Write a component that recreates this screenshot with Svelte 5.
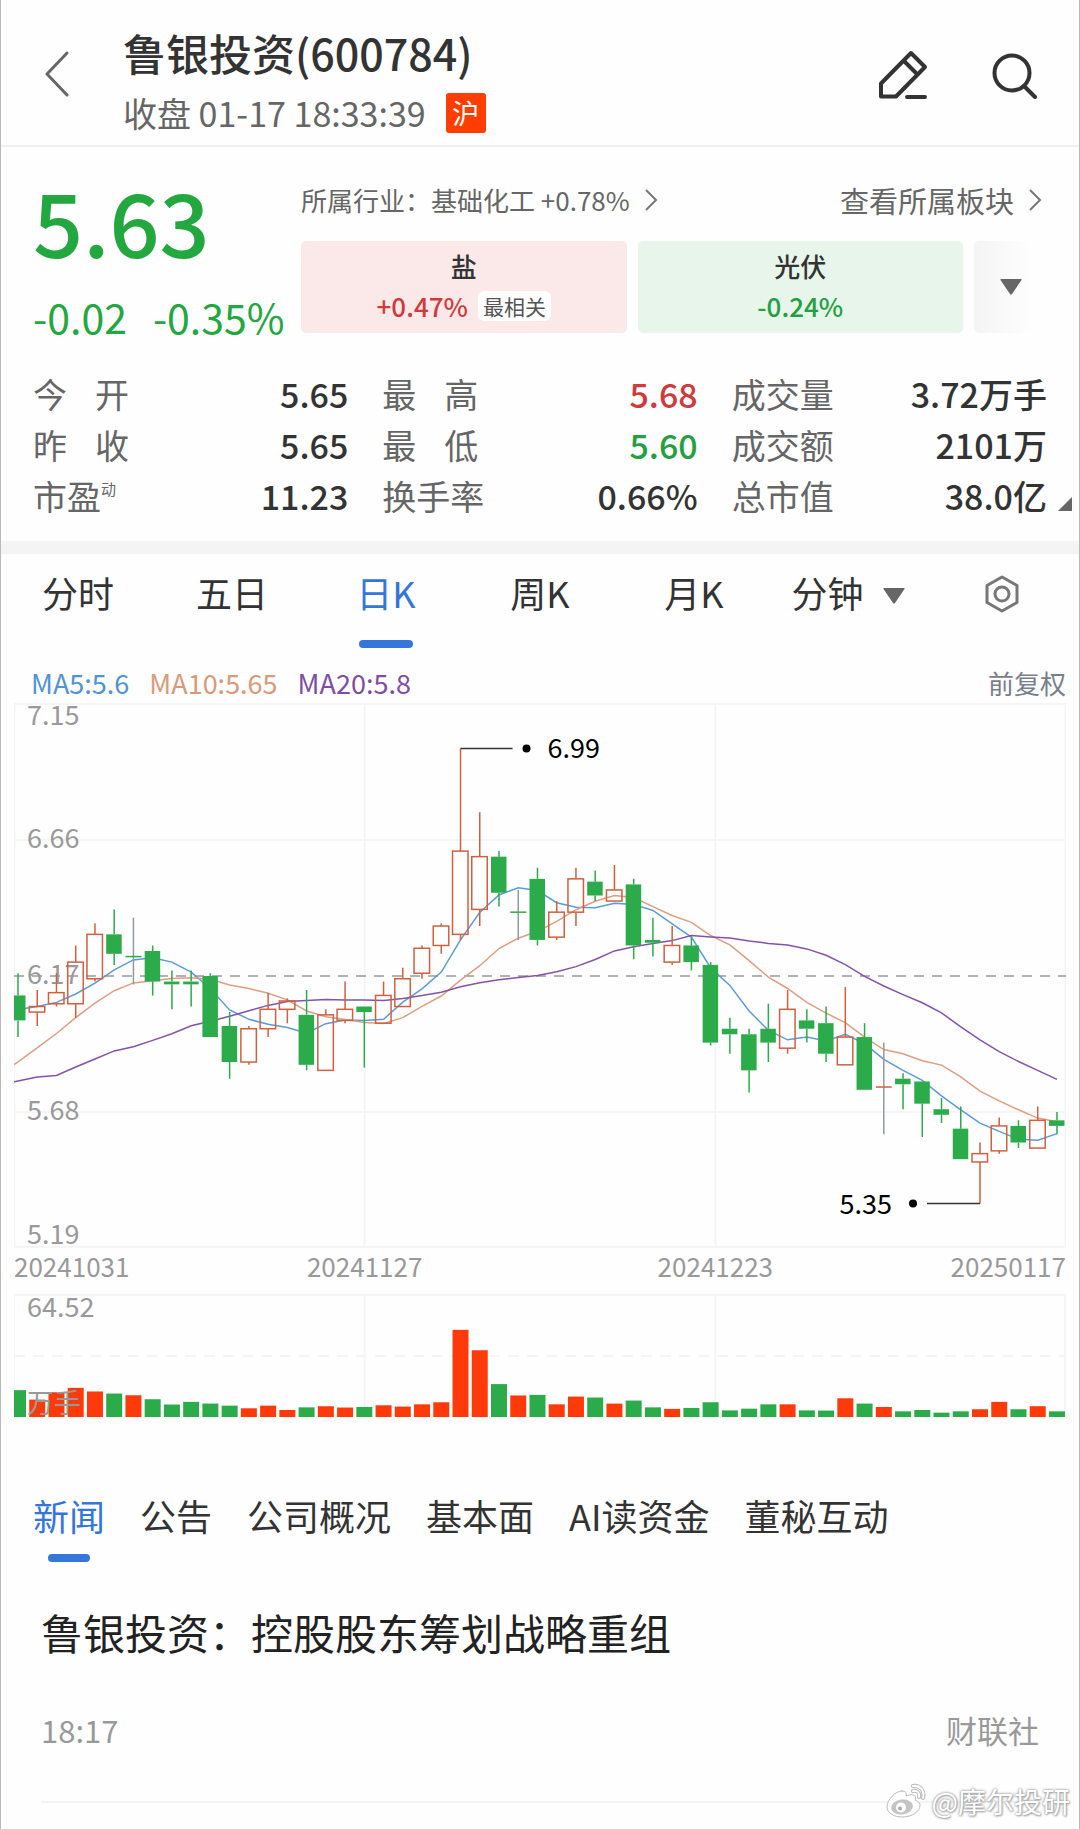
<script lang="ts">
  interface Candle {
    open: number;
    close: number;
    high: number;
    low: number;
    vol: number;
  }

  const periods = ['分时', '五日', '日K', '周K', '月K'];
  const sections = ['新闻', '公告', '公司概况', '基本面', 'AI读资金', '董秘互动'];

  let activePeriod = $state('日K');
  let activeSection = $state('新闻');

  const stats = [
    { label: '今 开', value: '5.65' },
    { label: '最 高', value: '5.68', tone: 'up' },
    { label: '成交量', value: '3.72万手' },
    { label: '昨 收', value: '5.65' },
    { label: '最 低', value: '5.60', tone: 'down' },
    { label: '成交额', value: '2101万' },
    { label: '市盈', sup: '动', value: '11.23' },
    { label: '换手率', value: '0.66%' },
    { label: '总市值', value: '38.0亿' }
  ];

  // open, close, high, low, volume
  const rows = [
    [6.10, 6.01, 6.18, 5.95, 14.2], [6.04, 6.06, 6.12, 5.99, 9.2], [6.07, 6.11, 6.18, 6.06, 13.1],
    [6.07, 6.22, 6.28, 6.02, 15.4], [6.16, 6.32, 6.36, 6.15, 13.5], [6.32, 6.25, 6.41, 6.21, 12.4],
    [6.24, 6.24, 6.38, 6.14, 11.5], [6.26, 6.15, 6.28, 6.10, 9.4], [6.15, 6.14, 6.19, 6.05, 6.6],
    [6.15, 6.14, 6.19, 6.06, 8.0], [6.17, 5.95, 6.18, 5.95, 7.1], [5.99, 5.86, 6.04, 5.80, 6.0],
    [5.86, 5.98, 5.99, 5.85, 4.6], [5.98, 6.05, 6.11, 5.95, 6.0], [6.05, 6.08, 6.09, 6.00, 3.7],
    [6.03, 5.85, 6.12, 5.83, 5.1], [5.83, 6.03, 6.05, 5.83, 5.7], [6.01, 6.05, 6.15, 6.00, 5.0],
    [6.06, 6.04, 6.06, 5.84, 5.3], [6.00, 6.10, 6.15, 6.00, 6.2], [6.06, 6.16, 6.20, 6.06, 5.5],
    [6.18, 6.27, 6.28, 6.16, 6.7], [6.28, 6.35, 6.36, 6.25, 7.8], [6.32, 6.62, 6.99, 6.30, 46.1],
    [6.41, 6.60, 6.76, 6.35, 35.3], [6.60, 6.47, 6.62, 6.42, 17.4], [6.40, 6.40, 6.48, 6.30, 11.4],
    [6.52, 6.30, 6.56, 6.28, 11.7], [6.31, 6.40, 6.44, 6.30, 6.7], [6.40, 6.52, 6.56, 6.35, 10.8],
    [6.51, 6.46, 6.55, 6.44, 10.3], [6.44, 6.48, 6.57, 6.44, 7.1], [6.50, 6.28, 6.52, 6.23, 8.7],
    [6.30, 6.29, 6.38, 6.24, 5.1], [6.22, 6.28, 6.35, 6.21, 4.3], [6.28, 6.22, 6.31, 6.19, 4.8],
    [6.21, 5.93, 6.22, 5.92, 7.8], [5.98, 5.96, 6.02, 5.89, 3.5], [5.96, 5.83, 5.98, 5.75, 4.4],
    [5.98, 5.93, 6.07, 5.86, 6.7], [5.91, 6.05, 6.12, 5.89, 6.7], [6.01, 5.98, 6.05, 5.93, 3.5],
    [6.00, 5.89, 6.06, 5.86, 3.4], [5.85, 5.95, 6.13, 5.85, 9.9], [5.95, 5.76, 6.00, 5.76, 7.1],
    [5.77, 5.77, 5.93, 5.60, 5.3], [5.80, 5.78, 5.82, 5.69, 3.0], [5.79, 5.71, 5.79, 5.59, 3.7],
    [5.69, 5.67, 5.73, 5.64, 2.3], [5.62, 5.51, 5.70, 5.51, 3.0], [5.50, 5.53, 5.57, 5.35, 4.1],
    [5.54, 5.63, 5.66, 5.53, 8.0], [5.63, 5.57, 5.65, 5.55, 4.1], [5.55, 5.65, 5.70, 5.55, 5.7],
    [5.65, 5.63, 5.68, 5.60, 3.0]
  ];
  const candles: Candle[] = rows.map(([open, close, high, low, vol]) => ({ open, close, high, low, vol }));

  // averages for the days whose window starts before the first candle
  const lead5 = [6.049, 6.06, 6.075, 6.105];
  const lead10 = [5.861, 5.911, 5.963, 6.02, 6.072, 6.117, 6.145, 6.153, 6.161];
  const lead20 = [
    5.792, 5.806, 5.812, 5.842, 5.871, 5.9, 5.915, 5.938, 5.962, 5.991,
    6.007, 6.025, 6.045, 6.064, 6.078, 6.082, 6.085, 6.084, 6.083
  ];

  const W = 1052;
  const PRICE_H = 544;
  const VOL_H = 122;
  const MAX = 7.15;
  const MIN = 5.19;
  const MAX_VOL = 64.52;
  const STEP = 19.24;

  const x = (i: number) => 4 + i * STEP;
  const y = (p: number) => 1 + ((MAX - p) / (MAX - MIN)) * PRICE_H;
  const volH = (v: number) => (v / MAX_VOL) * VOL_H;

  function average(n: number, lead: number[]) {
    const values = candles.map((_, i) => {
      if (i < lead.length) return lead[i];
      const part = candles.slice(i - n + 1, i + 1);
      return part.reduce((sum, c) => sum + c.close, 0) / n;
    });
    const first = values[0] - (values[1] - values[0]) * (4 / STEP);
    return [`0,${y(first).toFixed(1)}`, ...values.map((v, i) => `${x(i).toFixed(1)},${y(v).toFixed(1)}`)].join(' ');
  }

  const ma5 = average(5, lead5);
  const ma10 = average(10, lead10);
  const ma20 = average(20, lead20);

  const hiIndex = candles.findIndex((c) => c.high === 6.99);
  const loIndex = candles.findIndex((c) => c.low === 5.35);

  // a flat day is compared with the close before it
  function rises(i: number) {
    const c = candles[i];
    if (c.close !== c.open) return c.close > c.open;
    return i > 0 && c.close >= candles[i - 1].close;
  }
</script>

<div class="page">
  <header>
    <button type="button" class="back" aria-label="返回">
      <svg width="26" height="48" viewBox="0 0 26 48">
        <path d="M23 4 3 25l20 21" fill="none" stroke="#666" stroke-width="3" stroke-linecap="round" stroke-linejoin="round" />
      </svg>
    </button>
    <div class="heading">
      <h1>鲁银投资(600784)</h1>
      <p>收盘 01-17 18:33:39 <span class="market">沪</span></p>
    </div>
    <button type="button" class="tool" aria-label="编辑">
      <svg width="52" height="52" viewBox="0 0 52 52" fill="none" stroke="#333" stroke-width="4" stroke-linecap="round" stroke-linejoin="round">
        <path d="M35 6 49 20 20 49.500H5V36.500Z" />
        <path d="M29 15 40 26M31 50H49" />
      </svg>
    </button>
    <button type="button" class="tool" aria-label="搜索">
      <svg width="52" height="52" viewBox="0 0 52 52" fill="none" stroke="#333" stroke-width="4" stroke-linecap="round">
        <circle cx="24" cy="26" r="17.500" />
        <path d="M36 39 47 50" />
      </svg>
    </button>
  </header>

  <section class="quote">
    <div class="summary">
      <div class="price">
        <strong>5.63</strong>
        <div class="change"><span>-0.02</span><span>-0.35%</span></div>
      </div>
      <div class="boards">
        <div class="links">
          <a href="#industry">
            所属行业：基础化工 +0.78%
            <svg width="14" height="24" viewBox="0 0 14 24"><path d="M2 2 12 12 2 22" /></svg>
          </a>
          <a href="#boards" class="all">
            查看所属板块
            <svg width="14" height="24" viewBox="0 0 14 24"><path d="M2 2 12 12 2 22" /></svg>
          </a>
        </div>
        <div class="cards">
          <button type="button" class="card red">
            <span class="name">盐</span>
            <span class="rate">+0.47% <em>最相关</em></span>
          </button>
          <button type="button" class="card green">
            <span class="name">光伏</span>
            <span class="rate">-0.24%</span>
          </button>
          <button type="button" class="more" aria-label="更多板块">
            <svg width="22" height="16" viewBox="0 0 22 16"><path d="M1 0H21Q22 0 21.500 1L12 15Q11 16 10 15L.5 1Q0 0 1 0Z" fill="#666" /></svg>
          </button>
        </div>
      </div>
    </div>

    <dl class="stats">
      {#each stats as s (s.label)}
        <div class="stat">
          <dt class:spread={s.label.includes(' ')}>{s.label}{#if s.sup}<sup>{s.sup}</sup>{/if}</dt>
          <dd class={s.tone ?? ''}>{s.value}</dd>
        </div>
      {/each}
    </dl>
    <svg class="corner" width="14" height="14" viewBox="0 0 14 14"><path d="M14 0V14H0Z" fill="#666" /></svg>
  </section>

  <nav class="periods">
    {#each periods as p (p)}
      <button type="button" class:active={activePeriod === p} onclick={() => (activePeriod = p)}>{p}</button>
    {/each}
    <button type="button" class="minutes">
      分钟
      <svg width="22" height="16" viewBox="0 0 22 16"><path d="M1 0H21Q22 0 21.500 1L12 15Q11 16 10 15L.5 1Q0 0 1 0Z" fill="#666" /></svg>
    </button>
    <button type="button" class="settings" aria-label="图表设置">
      <svg width="36" height="38" viewBox="0 0 36 38" fill="none" stroke="#777" stroke-width="3" stroke-linejoin="round">
        <path d="M18 2 33 10.500V27.500L18 36 3 27.500V10.500Z" />
        <circle cx="18" cy="19" r="7" />
      </svg>
    </button>
  </nav>

  <section class="chart">
    <div class="legend">
      <span class="c5">MA5:5.6</span>
      <span class="c10">MA10:5.65</span>
      <span class="c20">MA20:5.8</span>
      <span class="adjust">前复权</span>
    </div>

    <svg class="plot" viewBox="0 0 {W} 545" role="img" aria-label="日K线">
      <g class="grid">
        <rect x="0.500" y="1" width={W - 1} height={PRICE_H - 1} />
        <path d="M0 {y(6.66)}H{W}M0 {y(5.68)}H{W}M{W / 3} 1V{PRICE_H}M{(W / 3) * 2} 1V{PRICE_H}" />
      </g>
      <path class="mid" d="M0 {y(6.17)}H{W}" />
      <g class="axis">
        <text x="13" y="22">7.15</text>
        <text x="13" y="145">6.66</text>
        <text x="13" y="281">6.17</text>
        <text x="13" y="417">5.68</text>
        <text x="13" y="541">5.19</text>
      </g>

      <polyline class="ma c5" points={ma5} />
      <polyline class="ma c10" points={ma10} />
      <polyline class="ma c20" points={ma20} />

      {#each candles as c, i}
        {@const top = y(Math.max(c.open, c.close))}
        {@const bottom = y(Math.min(c.open, c.close))}
        <g class={rises(i) ? 'rise' : 'fall'}>
          {#if c.open === c.close}
            <path class="flat" d="M{x(i)} {y(c.high)}V{y(c.low)}" />
            <path d="M{x(i) - 8} {top}h16" />
          {:else}
            <path d="M{x(i)} {y(c.high)}V{top}M{x(i)} {bottom}V{y(c.low)}" />
            <rect x={x(i) - 8} y={top} width="15.500" height={bottom - top} />
          {/if}
        </g>
      {/each}

      <g class="mark">
        <path d="M{x(hiIndex)} {y(6.99)}h52M{x(loIndex)} {y(5.35)}h-53" />
        <circle cx={x(hiIndex) + 66} cy={y(6.99)} r="4" />
        <text x={x(hiIndex) + 87} y={y(6.99) + 10}>6.99</text>
        <circle cx={x(loIndex) - 67} cy={y(5.35)} r="4" />
        <text x={x(loIndex) - 88} y={y(5.35) + 10} text-anchor="end">5.35</text>
      </g>
    </svg>

    <div class="dates">
      <span>20241031</span>
      <span>20241127</span>
      <span>20241223</span>
      <span>20250117</span>
    </div>

    <svg class="plot" viewBox="0 0 {W} 124" role="img" aria-label="成交量">
      <g class="grid">
        <path d="M0 {VOL_H}V1H{W - 1}V{VOL_H}M{W / 3} 1V{VOL_H}M{(W / 3) * 2} 1V{VOL_H}" />
        <path d="M0 62H{W}" stroke-dasharray="11 8" />
      </g>
      {#each candles as c, i}
        <rect class={c.close >= c.open ? 'vol-up' : 'vol-down'} x={x(i) - 8} y={VOL_H + 1 - volH(c.vol)} width="16" height={volH(c.vol)} />
      {/each}
      <g class="axis">
        <text x="13" y="23">64.52</text>
        <text x="13" y="119">万手</text>
      </g>
    </svg>
  </section>

  <nav class="sections">
    {#each sections as s (s)}
      <button type="button" class:active={activeSection === s} onclick={() => (activeSection = s)}>{s}</button>
    {/each}
  </nav>

  <article>
    <h2>鲁银投资：控股股东筹划战略重组</h2>
    <div class="meta"><time>18:17</time><span>财联社</span></div>
  </article>

  <div class="watermark">
    <svg width="40" height="36" viewBox="0 0 40 36" fill="none" stroke-linecap="round">
      <path d="M16 8C9 8 1 17 1 24c0 6 7 10 15 10 10 0 18-5 18-12 0-3-3-4-5-5 2-4-1-7-9-4 1-3 0-5-4-5Z" fill="#fff" stroke="#bbb" />
      <ellipse cx="16" cy="24" rx="11" ry="7.500" fill="#c4c4c4" transform="rotate(-8 16 24)" />
      <circle cx="15" cy="24.500" r="5" fill="#fff" />
      <circle cx="14" cy="25.500" r="2" fill="#aaa" />
      <path d="M27 8c4-1 7 2 6 6M27 3c7-1 12 5 10 12" stroke="#bbb" stroke-width="4" />
      <path d="M27 8c4-1 7 2 6 6M27 3c7-1 12 5 10 12" stroke="#fff" stroke-width="2" />
    </svg>
    @摩尔投研
  </div>
</div>

<style>
  :global(body) {
    margin: 0;
    background: #fefefe;
  }

  .page {
    position: relative;
    box-sizing: border-box;
    min-height: 100vh;
    border-left: 1px solid #b9b9b9;
    border-right: 1px solid #b9b9b9;
    font-family: 'Noto Sans CJK SC', sans-serif;
    color: #333;
  }

  button {
    padding: 0;
    border: 0;
    background: none;
    font: inherit;
    color: inherit;
    cursor: pointer;
  }
  h1, h2, p, dl, dd {
    margin: 0;
  }
  svg {
    display: block;
  }

  header {
    display: flex;
    padding-right: 39px;
    border-bottom: 2px solid #f0f0f0;
  }
  .back {
    width: 122px;
    padding-left: 43px;
  }
  .heading {
    flex: 1;
    padding: 24px 0 4px;
  }
  h1 {
    font-size: 43px;
    line-height: 56px;
    font-weight: 500;
  }
  .heading p {
    display: flex;
    align-items: center;
    gap: 20px;
    margin-top: 5px;
    font-size: 34px;
    line-height: 56px;
    color: #666;
  }
  .market {
    width: 40px;
    border-radius: 3px;
    background: #ff3d00;
    color: #fff;
    font-size: 27px;
    line-height: 40px;
    text-align: center;
  }
  .tool {
    margin-left: 60px;
  }

  .quote {
    position: relative;
    padding: 27px 32px 20px;
    border-bottom: 13px solid #f4f4f4;
  }
  .summary {
    display: grid;
    grid-template-columns: 268px 1fr;
  }
  .price {
    color: #23a73f;
    white-space: nowrap;
  }
  .price strong {
    display: block;
    font-size: 88px;
    line-height: 92px;
    font-weight: 500;
  }
  .change {
    display: flex;
    gap: 26px;
    margin-top: 20px;
    font-size: 41px;
    line-height: 60px;
  }

  .links {
    display: flex;
    justify-content: space-between;
    padding-right: 5px;
    line-height: 52px;
  }
  .links a {
    display: flex;
    align-items: center;
    gap: 14px;
    font-size: 26px;
    color: #666;
    text-decoration: none;
    white-space: nowrap;
  }
  .links .all {
    font-size: 29px;
  }
  .links path {
    fill: none;
    stroke: #777;
    stroke-width: 2;
  }
  .cards {
    display: grid;
    grid-template-columns: 1fr 1fr 73px;
    gap: 11px;
    margin-top: 15px;
  }
  .card {
    display: flex;
    flex-direction: column;
    align-items: center;
    padding: 5px 0 7px;
    border-radius: 5px;
    font-size: 26px;
    line-height: 40px;
    font-weight: 500;
  }
  .rate {
    display: flex;
    align-items: center;
    gap: 10px;
  }
  .red {
    background: #fbe9e9;
  }
  .red .rate {
    color: #cf3a3c;
  }
  .green {
    background: #e7f5eb;
  }
  .green .rate {
    color: #23a03f;
  }
  .name {
    color: #333;
  }
  .rate em {
    padding: 0 5px;
    border-radius: 6px;
    background: #fff;
    color: #555;
    font-size: 21px;
    line-height: 30px;
    font-weight: 400;
    font-style: normal;
  }
  .more {
    display: flex;
    align-items: center;
    justify-content: center;
    border-radius: 5px;
    background: linear-gradient(90deg, #f4f4f4, #fefefe 80%);
  }

  .stats {
    display: grid;
    grid-template-columns: repeat(3, 1fr);
    column-gap: 34px;
    margin-top: 22px;
    font-size: 34px;
    line-height: 51px;
  }
  .stat {
    display: flex;
    justify-content: space-between;
    white-space: nowrap;
  }
  dt {
    color: #666;
  }
  dt.spread {
    width: 96px;
    text-align-last: justify;
  }
  sup {
    font-size: 15px;
    line-height: 0;
    vertical-align: 15px;
  }
  dd {
    font-weight: 500;
  }
  dd.up {
    color: #cf3a3c;
  }
  dd.down {
    color: #23a03f;
  }
  .corner {
    position: absolute;
    right: 7px;
    bottom: 30px;
  }

  .periods {
    display: grid;
    grid-template-columns: repeat(7, 1fr);
    padding: 11px 0 15px;
  }
  .periods button {
    display: flex;
    flex-wrap: wrap;
    justify-content: center;
    align-content: flex-start;
    font-size: 36px;
    line-height: 54px;
  }
  .periods button::after {
    content: '';
    flex: 0 0 100%;
    height: 8px;
    margin-top: 21px;
  }
  .periods .active,
  .sections .active {
    color: #3576dc;
  }
  .periods .active::after {
    flex: 0 0 54px;
    margin-left: 50px;
    margin-right: 50px;
    border-radius: 4px;
    background: #3576dc;
  }
  .periods .minutes {
    column-gap: 19px;
  }
  .minutes svg {
    margin-top: 23px;
  }
  .settings svg {
    margin-top: 10px;
  }

  .chart {
    padding: 0 13px;
  }
  .legend {
    display: flex;
    gap: 20px;
    padding-left: 17px;
    font-size: 27px;
    line-height: 40px;
  }
  .legend .c5 {
    color: #4f94d4;
  }
  .legend .c10 {
    color: #da9a78;
  }
  .legend .c20 {
    color: #804da3;
  }
  .adjust {
    margin-left: auto;
    color: #777f8a;
    font-size: 26px;
  }

  .plot {
    width: 100%;
    height: auto;
  }
  .grid {
    fill: none;
    stroke: #f5f5f8;
    stroke-width: 2;
  }
  .mid {
    stroke: #666;
    stroke-width: 1;
    stroke-dasharray: 10 8;
  }
  .axis text {
    fill: #999;
    font-size: 27px;
  }
  .ma {
    fill: none;
    stroke-width: 1.5;
  }
  .ma.c5 {
    stroke: #5b9bd8;
  }
  .ma.c10 {
    stroke: #dd9f80;
  }
  .ma.c20 {
    stroke: #8453a8;
  }
  .rise {
    fill: none;
    stroke: #d0603f;
    stroke-width: 1.5;
  }
  .fall {
    fill: #2cab4b;
    stroke: #2cab4b;
    stroke-width: 1.5;
  }
  .fall rect {
    stroke-width: 0;
  }
  .flat {
    stroke: #8f9aa3;
  }
  .mark path {
    stroke: #333;
    stroke-width: 1.5;
  }
  .mark text {
    fill: #000;
    font-size: 27px;
  }
  .vol-up {
    fill: #ff3a0a;
  }
  .vol-down {
    fill: #2cab4b;
  }

  /* the two middle dates sit under the grid lines at one and two thirds */
  .dates {
    display: grid;
    grid-template-columns: 1fr 2fr 2fr 1fr;
    padding-bottom: 10px;
    color: #999;
    font-size: 26px;
    line-height: 36px;
    text-align: center;
  }
  .dates span:first-child {
    text-align: left;
  }
  .dates span:last-child {
    text-align: right;
  }

  .sections {
    display: flex;
    gap: 35px;
    padding: 70px 32px 0;
  }
  .sections button {
    display: flex;
    flex-direction: column;
    align-items: center;
    font-size: 36px;
    line-height: 54px;
    white-space: nowrap;
  }
  .sections button::after {
    content: '';
    width: 42px;
    height: 8px;
    margin-top: 12px;
    border-radius: 4px;
  }
  .sections .active::after {
    background: #3576dc;
  }

  article {
    margin: 40px 40px 0;
    padding-bottom: 48px;
    border-bottom: 2px solid #f3f3f3;
  }
  h2 {
    font-size: 42px;
    line-height: 60px;
    font-weight: 400;
    color: #222;
  }
  .meta {
    display: flex;
    justify-content: space-between;
    margin-top: 45px;
    color: #999;
    font-size: 31px;
    line-height: 46px;
  }

  .watermark {
    position: absolute;
    right: 9px;
    bottom: 8px;
    display: flex;
    align-items: center;
    gap: 6px;
    color: #fff;
    font-size: 28px;
    line-height: 40px;
    text-shadow: 0 0 2px #999, 0 0 3px #aaa, 1px 1px 2px #aaa;
  }
</style>
